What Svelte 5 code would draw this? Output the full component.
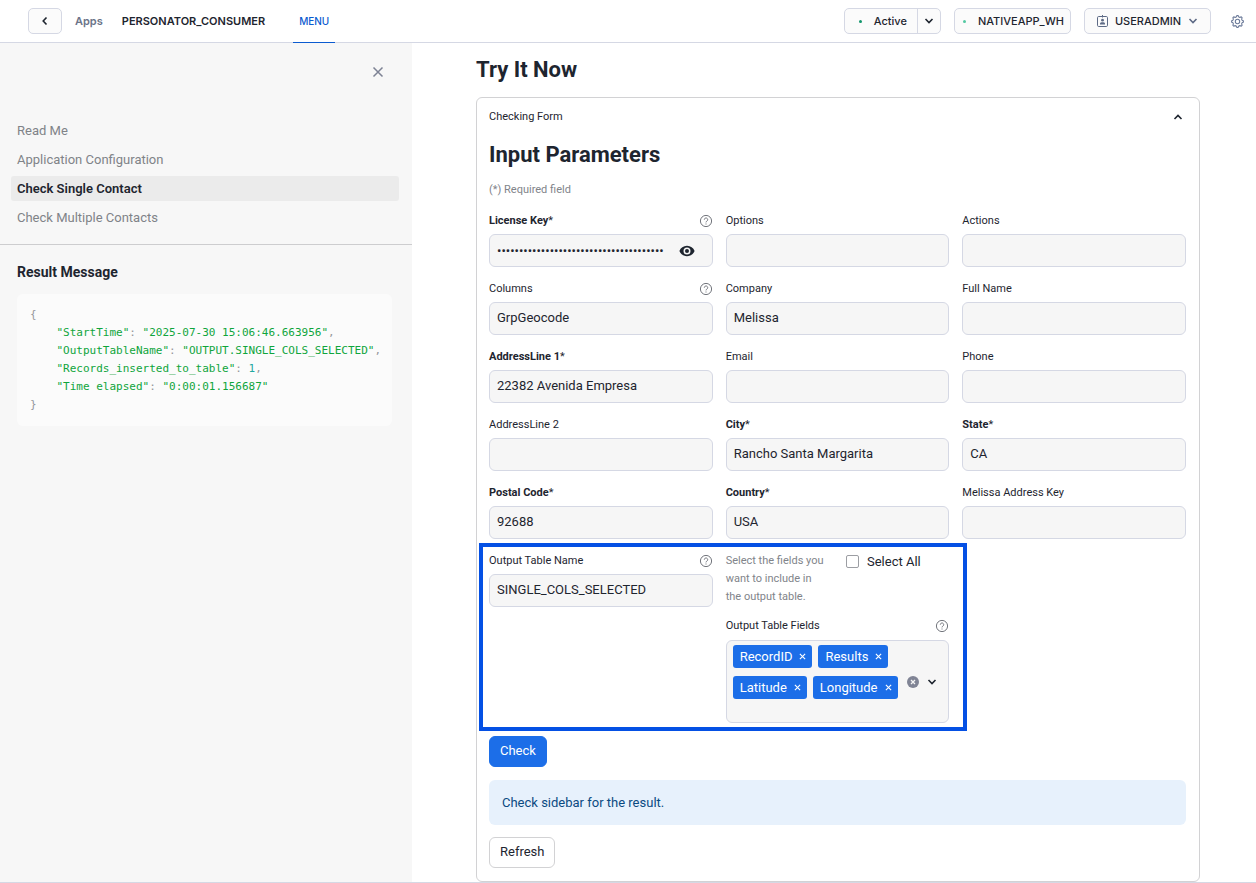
<script lang="ts">
  type Field = {
    id: string;
    label: string;
    value: string;
    required?: boolean;
    help?: boolean;
    secret?: boolean;
  };

  const pages = ['Read Me', 'Application Configuration', 'Check Single Contact', 'Check Multiple Contacts'];
  let current = $state('Check Single Contact');

  let fields: Field[] = $state([
    { id: 'license', label: 'License Key', value: 'x'.repeat(38), required: true, help: true, secret: true },
    { id: 'options', label: 'Options', value: '' },
    { id: 'actions', label: 'Actions', value: '' },
    { id: 'columns', label: 'Columns', value: 'GrpGeocode', help: true },
    { id: 'company', label: 'Company', value: 'Melissa' },
    { id: 'fullname', label: 'Full Name', value: '' },
    { id: 'address1', label: 'AddressLine 1', value: '22382 Avenida Empresa', required: true },
    { id: 'email', label: 'Email', value: '' },
    { id: 'phone', label: 'Phone', value: '' },
    { id: 'address2', label: 'AddressLine 2', value: '' },
    { id: 'city', label: 'City', value: 'Rancho Santa Margarita', required: true },
    { id: 'state', label: 'State', value: 'CA', required: true },
    { id: 'postal', label: 'Postal Code', value: '92688', required: true },
    { id: 'country', label: 'Country', value: 'USA', required: true },
    { id: 'mak', label: 'Melissa Address Key', value: '' },
  ]);

  let outputTable = $state('SINGLE_COLS_SELECTED');
  let selectAll = $state(false);
  let tags = $state(['RecordID', 'Results', 'Latitude', 'Longitude']);
  let showKey = $state(false);

  const result: [string, string | number][] = [
    ['StartTime', '2025-07-30 15:06:46.663956'],
    ['OutputTableName', 'OUTPUT.SINGLE_COLS_SELECTED'],
    ['Records_inserted_to_table', 1],
    ['Time elapsed', '0:00:01.156687'],
  ];

  // gear outline: 8 teeth around the hub
  const gear = Array.from({ length: 32 }, (_, i) => {
    const r = i % 4 < 2 ? 7.3 : 5.8;
    const a = ((i - 0.5) / 32) * Math.PI * 2;
    return `${(8 + r * Math.cos(a)).toFixed(2)},${(8 + r * Math.sin(a)).toFixed(2)}`;
  }).join(' ');

  function removeTag(tag: string) {
    tags = tags.filter((t) => t !== tag);
  }
</script>

{#snippet helpIcon()}
  <svg class="help" viewBox="0 0 14 14" aria-hidden="true">
    <circle cx="7" cy="7" r="5.6" />
    <path d="M5.3 5.7a1.7 1.7 0 1 1 2.6 1.4c-.6.4-.9.6-.9 1.3M7 9.5v1" />
  </svg>
{/snippet}

{#snippet chevron(up = false)}
  <svg class="chevron" viewBox="0 0 10 10" aria-hidden="true">
    <path d={up ? 'M1.5 7 5 3.5 8.5 7' : 'M1.5 3 5 6.5 8.5 3'} />
  </svg>
{/snippet}

<div class="app">
  <header>
    <button class="box back" aria-label="Back">
      <svg class="chevron" viewBox="0 0 10 10" aria-hidden="true"><path d="M6.5 1.5 3.2 5l3.3 3.5" /></svg>
    </button>
    <a class="apps" href="#apps">Apps</a>
    <span class="name">PERSONATOR_CONSUMER</span>
    <a class="menu" href="#menu">MENU</a>
    <div class="actions">
      <div class="box split">
        <button class="active"><span class="dot"></span>Active</button>
        <button class="more" aria-label="Status options">{@render chevron()}</button>
      </div>
      <button class="box warehouse"><span class="dot light"></span>NATIVEAPP_WH</button>
      <button class="box role">
        <svg class="badge" viewBox="0 0 11 13" aria-hidden="true">
          <rect x="0.5" y="1.5" width="10" height="10" rx="1.2" />
          <path d="M5.5 0v2.500" />
          <circle class="solid" cx="5.5" cy="5.2" r="1.4" />
          <path class="solid" d="M3 9.5V8.800C3 7.500 4.200 7.200 5.500 7.200S8 7.500 8 8.800V9.500z" />
        </svg>
        USERADMIN
        {@render chevron()}
      </button>
      <button class="settings" aria-label="Settings">
        <svg viewBox="0 0 16 16" aria-hidden="true">
          <polygon points={gear} />
          <circle cx="8" cy="8" r="2.7" />
        </svg>
      </button>
    </div>
  </header>

  <div class="body">
    <aside>
      <div class="close-row">
        <button aria-label="Close sidebar">
          <svg viewBox="0 0 12 12" aria-hidden="true"><path d="M1.5 1.5l9 9M10.5 1.5l-9 9" /></svg>
        </button>
      </div>
      <nav>
        {#each pages as page}
          <a href="#page" class:selected={page === current} onclick={() => (current = page)}>{page}</a>
        {/each}
      </nav>
      <section class="result">
        <h3>Result Message</h3>
        <pre><span class="punct">{'{'}</span>
{#each result as [key, val], i}    <span class="str">"{key}"</span><span class="punct">:</span> {#if typeof val === 'number'}<span class="num">{val}</span>{:else}<span class="str">"{val}"</span>{/if}{#if i < result.length - 1}<span class="punct">,</span>{/if}{'\n'}{/each}<span class="punct">{'}'}</span></pre>
      </section>
    </aside>

    <main>
      <h1>Try It Now</h1>
      <details open>
        <summary>Checking Form {@render chevron(true)}</summary>
        <div class="content">
          <h2>Input Parameters</h2>
          <p class="caption">(*) Required field</p>

          <div class="grid">
            {#each fields as f (f.id)}
              <div class="field">
                <div class="label">
                  <label for={f.id}>{#if f.required}<b>{f.label}</b>*{:else}{f.label}{/if}</label>
                  {#if f.help}{@render helpIcon()}{/if}
                </div>
                {#if f.secret}
                  <div class="control">
                    <input id={f.id} type={showKey ? 'text' : 'password'} bind:value={f.value} />
                    <button class="eye" aria-label="Show key" onclick={() => (showKey = !showKey)}>
                      <svg viewBox="0 0 16 12" aria-hidden="true">
                        <path fill-rule="evenodd" d="M8 .8C4.500.8 1.600 2.900.4 6c1.200 3.100 4.100 5.200 7.600 5.200s6.400-2.100 7.600-5.200C14.400 2.900 11.500.8 8 .8zm0 8.700a3.500 3.500 0 1 1 0-7 3.500 3.500 0 0 1 0 7zM8 4a2 2 0 1 0 0 4 2 2 0 0 0 0-4z" />
                      </svg>
                    </button>
                  </div>
                {:else}
                  <div class="control"><input id={f.id} type="text" bind:value={f.value} /></div>
                {/if}
              </div>
            {/each}

            <div class="output">
              <div class="field">
                <div class="label"><label for="output">Output Table Name</label>{@render helpIcon()}</div>
                <div class="control"><input id="output" type="text" bind:value={outputTable} /></div>
              </div>
              <div>
                <div class="pick">
                  <p class="caption">Select the fields you want to include in the output table.</p>
                  <label class="check"><input type="checkbox" bind:checked={selectAll} />Select All</label>
                </div>
                <div class="label"><label for="tags">Output Table Fields</label>{@render helpIcon()}</div>
                <div class="multi">
                  <div class="tags">
                    {#each tags as tag}
                      <span class="tag">
                        {tag}
                        <button aria-label="Remove {tag}" onclick={() => removeTag(tag)}>
                          <svg viewBox="0 0 8 8" aria-hidden="true"><path d="M1 1l6 6M7 1L1 7" /></svg>
                        </button>
                      </span>
                    {/each}
                    <input id="tags" type="text" />
                  </div>
                  <button class="clear" aria-label="Clear all" onclick={() => (tags = [])}>
                    <svg viewBox="0 0 12 12" aria-hidden="true"><circle cx="6" cy="6" r="6" /><path d="M4 4l4 4M8 4L4 8" /></svg>
                  </button>
                  <button aria-label="Open list">{@render chevron()}</button>
                </div>
              </div>
            </div>
          </div>

          <button class="btn primary">Check</button>
          <div class="alert" role="status">Check sidebar for the result.</div>
          <button class="btn">Refresh</button>
        </div>
      </details>
    </main>
  </div>
</div>

<style>
  :global(body) {
    margin: 0;
    background: #fff;
  }
  .app {
    box-sizing: border-box;
    min-height: 100vh;
    display: flex;
    flex-direction: column;
    border-bottom: 1px solid #d5d8e4;
    font-family: Roboto, 'Liberation Sans', sans-serif;
    font-size: 13px;
    color: #1e252f;
  }
  button,
  input {
    font: inherit;
    color: inherit;
  }
  button {
    display: flex;
    align-items: center;
    padding: 0;
    border: 0;
    background: none;
    cursor: pointer;
  }
  a {
    color: inherit;
    text-decoration: none;
  }
  h1,
  h2,
  h3,
  p,
  pre {
    margin: 0;
  }
  svg {
    display: block;
    flex: none;
    fill: none;
    stroke: currentColor;
  }
  .chevron {
    width: 10px;
    height: 10px;
    stroke-width: 1.6;
  }

  header {
    box-sizing: border-box;
    height: 43px;
    display: flex;
    align-items: center;
    padding: 0 12px 0 28px;
    border-bottom: 1px solid #d5d8e4;
    font-family: Inter, 'Liberation Sans', sans-serif;
    font-size: 11px;
    font-weight: 500;
  }
  .box {
    box-sizing: border-box;
    height: 26px;
    border: 1px solid #d5d8e4;
    border-radius: 5px;
    background: #fbfbfb;
  }
  .back {
    width: 34px;
    justify-content: center;
  }
  .apps {
    margin-left: 13px;
    color: #6b7488;
    font-weight: 600;
  }
  .name {
    margin-left: 19px;
    font-weight: 600;
  }
  .menu {
    box-sizing: border-box;
    align-self: stretch;
    margin: 0 0 -1px 28px;
    padding: 0 6px;
    border-bottom: 1px solid #0b5bd0;
    color: #0b5bd0;
    font-size: 10px;
    line-height: 43px;
  }
  .actions {
    margin-left: auto;
    display: flex;
    align-items: center;
    gap: 13px;
  }
  .split {
    display: flex;
  }
  .active {
    padding: 0 10px 0 14px;
    border-right: 1px solid #d5d8e4;
  }
  .more {
    padding: 0 6px;
  }
  .dot {
    width: 3px;
    height: 3px;
    margin-right: 12px;
    border-radius: 50%;
    background: #12966c;
  }
  .dot.light {
    background: #53c9a2;
  }
  .warehouse {
    padding: 0 6px 0 8px;
  }
  .role {
    gap: 7px;
    padding: 0 12px;
  }
  .role svg {
    color: #5d6a85;
  }
  .badge {
    width: 11px;
    height: 13px;
  }
  .badge .solid {
    fill: currentColor;
    stroke: none;
  }
  .settings {
    margin-left: 7px;
    color: #6b7a99;
  }
  .settings svg {
    width: 13px;
    height: 13px;
    stroke-width: 1.3;
  }

  .body {
    flex: 1;
    display: flex;
  }
  aside {
    flex: 0 0 412px;
    min-width: 0;
    background: #f7f7f7;
  }
  .close-row {
    display: flex;
    justify-content: flex-end;
    padding: 23px 28px 40px 0;
    color: #7d8294;
  }
  .close-row svg {
    width: 12px;
    height: 12px;
    stroke-width: 1.5;
  }
  nav {
    display: flex;
    flex-direction: column;
    gap: 4px;
    padding: 0 13px 14px 11px;
    border-bottom: 1px solid #cdcdcf;
  }
  nav a {
    padding: 0 6px;
    border-radius: 3px;
    color: #808388;
    line-height: 25px;
  }
  nav a.selected {
    background: #ebebeb;
    color: #1e252f;
    font-weight: 600;
  }
  .result {
    padding: 17px 20px 0 17px;
  }
  h3 {
    margin-bottom: 12px;
    font-size: 14px;
    font-weight: 700;
    line-height: 20px;
  }
  pre {
    padding: 12px 13px;
    border-radius: 6px;
    background: #fbfbfb;
    font-family: 'DejaVu Sans Mono', monospace;
    font-size: 11px;
    line-height: 18px;
  }
  .str {
    color: #0fa53c;
  }
  .num {
    color: #1fa8a0;
  }
  .punct {
    color: #96979c;
  }

  main {
    flex: 1;
    min-width: 0;
    padding: 13px 56px 0 64px;
  }
  h1,
  h2 {
    font-size: 22px;
    font-weight: 700;
    line-height: 28px;
  }
  h1 {
    margin-bottom: 13px;
  }
  details {
    border: 1px solid #d2d2d4;
    border-radius: 6px;
  }
  summary {
    display: flex;
    align-items: center;
    justify-content: space-between;
    padding: 0 16px 0 12px;
    font-size: 11px;
    line-height: 37px;
    cursor: pointer;
  }
  .content {
    padding: 6px 13px 13px 12px;
  }
  .caption {
    color: #81848a;
    font-size: 11px;
    line-height: 18px;
  }
  .content > .caption {
    margin: 12px 0 13px;
  }
  .grid {
    display: grid;
    grid-template-columns: repeat(3, 1fr);
    gap: 13px;
    margin-bottom: 13px;
  }
  .label {
    height: 18px;
    display: flex;
    align-items: center;
    justify-content: space-between;
    margin-bottom: 4px;
    font-size: 11px;
  }
  .label label {
    align-self: flex-start;
    line-height: 18px;
  }
  .label b {
    font-weight: 700;
  }
  .help {
    width: 14px;
    height: 14px;
    color: #73767d;
  }
  .control {
    box-sizing: border-box;
    height: 33px;
    display: flex;
    align-items: center;
    border: 1px solid #d5d8e4;
    border-radius: 6px;
    background: #f6f6f6;
  }
  .control input {
    flex: 1;
    min-width: 0;
    padding: 0 7px 2px;
    border: 0;
    background: none;
    outline: none;
  }
  .control input[type='password'] {
    padding-bottom: 0;
  }
  .eye {
    padding: 0 17px 0 0;
  }
  .eye svg {
    width: 16px;
    height: 12px;
    fill: currentColor;
    stroke: none;
  }

  .output {
    grid-column: 1 / 3;
    position: relative;
    display: grid;
    grid-template-columns: 1fr 1fr;
    gap: 13px;
  }
  /* callout frame drawn around the output settings */
  .output::after {
    content: '';
    position: absolute;
    inset: -9px -18px -8px -10px;
    border: 4px solid #0450e4;
    pointer-events: none;
  }
  .pick {
    display: grid;
    grid-template-columns: 1fr 1fr;
    gap: 13px;
    margin-bottom: 11px;
  }
  .pick .caption {
    padding-right: 4px;
  }
  .check {
    display: flex;
    align-items: center;
    gap: 8px;
    height: 18px;
    white-space: nowrap;
  }
  .check input {
    appearance: none;
    width: 13px;
    height: 13px;
    margin: 0 0 0 2px;
    border: 1px solid #9c9ea3;
    border-radius: 2px;
    background: #fff;
  }
  .check input:checked {
    background: #1c6ee8;
  }
  .pick + .label {
    margin-bottom: 5px;
  }
  .multi {
    box-sizing: border-box;
    min-height: 83px;
    display: flex;
    align-items: center;
    padding: 4px 11px 4px 6px;
    border: 1px solid #d5d8e4;
    border-radius: 6px;
    background: #f6f6f6;
  }
  .tags {
    flex: 1;
    align-self: flex-start;
    display: flex;
    flex-wrap: wrap;
    gap: 8px 6px;
    min-width: 0;
  }
  .tags input {
    width: 100%;
    height: 10px;
    padding: 0;
    border: 0;
    background: none;
    outline: none;
  }
  .tag {
    display: flex;
    align-items: center;
    gap: 7px;
    padding: 0 6px 0 7px;
    border-radius: 3px;
    background: #1c6ee8;
    color: #fff;
    line-height: 23px;
  }
  .tag svg {
    width: 7px;
    height: 7px;
    stroke-width: 1.3;
  }
  .clear {
    margin-right: 8px;
  }
  .clear svg {
    width: 12px;
    height: 12px;
    stroke: #f6f6f6;
    stroke-width: 1.3;
  }
  .clear circle {
    fill: #808495;
    stroke: none;
  }
  .btn {
    height: 31px;
    padding: 0 10px 2px;
    border: 1px solid #d2d2d4;
    border-radius: 6px;
    background: #fff;
  }
  .btn.primary {
    border-color: #1c6ee8;
    background: #1c6ee8;
    color: #fff;
  }
  .alert {
    margin: 13px 0 12px;
    padding: 0 13px;
    border-radius: 6px;
    background: #e7f1fc;
    color: #0b4a82;
    line-height: 45px;
  }
</style>
